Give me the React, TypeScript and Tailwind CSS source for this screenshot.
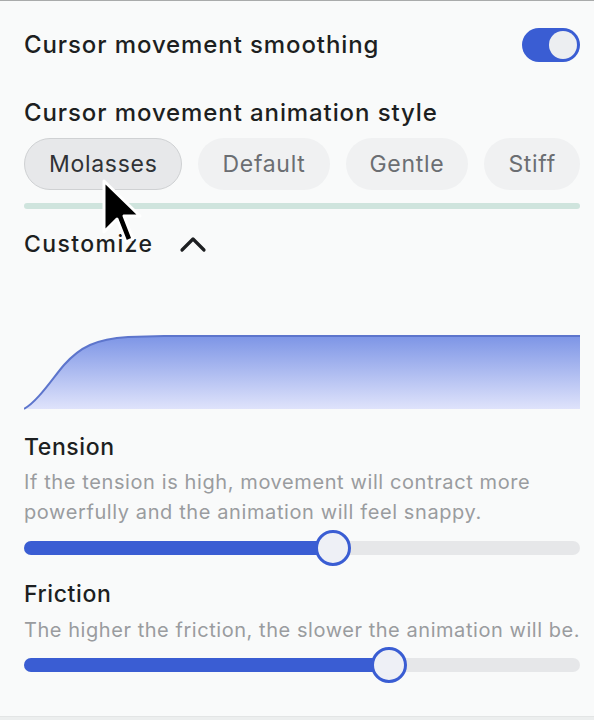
import React from "react";

const presets = ["Molasses", "Default", "Gentle", "Stiff"];

function Slider({ value }: { value: number }) {
  return (
    <div className="relative h-[14px] w-full rounded-full bg-[#e6e7e9]">
      <div
        className="absolute left-0 top-0 h-full rounded-full bg-[#3a5dd3]"
        style={{ width: `${value}%` }}
      />
      <div
        className="absolute top-1/2 h-[36px] w-[36px] -translate-x-1/2 -translate-y-1/2 rounded-full border-[3px] border-[#3a5dd3] bg-[#eef0f6]"
        style={{ left: `${value}%` }}
      />
    </div>
  );
}

export default function App() {
  return (
    <main
      className="relative flex h-[720px] w-[594px] flex-col overflow-hidden border-t border-[#a9abab] bg-[#f9fafa] text-[#1d1f21]"
      style={{ fontFamily: "Inter, 'Noto Sans', sans-serif" }}
    >
      <div className="flex flex-1 flex-col pl-6 pr-[14px]">
        {/* smoothing toggle */}
        <div className="mt-[26px] flex items-center justify-between">
          <h2 className="text-[24px] font-medium tracking-[0.9px]">Cursor movement smoothing</h2>
          <div className="flex h-[34px] w-[58px] items-center justify-end rounded-full bg-[#3a5dd3] p-[3px]">
            <div className="h-[28px] w-[28px] rounded-full bg-[#eceef1]" />
          </div>
        </div>

        <h2 className="mt-[32px] text-[24px] font-medium tracking-[0.9px]">Cursor movement animation style</h2>

        <div className="mt-[7px] flex gap-[16px]">
          {presets.map((p, i) => (
            <button
              key={p}
              className={
                i === 0
                  ? "h-[52px] rounded-full border border-[#cfd1d3] bg-[#e7e8ea] px-[24px] text-[23px] tracking-[0.7px] text-[#303236]"
                  : "h-[52px] rounded-full border border-transparent bg-[#f0f1f2] px-[23px] text-[23px] tracking-[0.7px] text-[#6b6e72]"
              }
            >
              {p}
            </button>
          ))}
        </div>

        <div className="mt-[13px] h-[6px] w-full rounded-full bg-[#cfe4dd]" />

        <div className="mt-[18px] flex items-center gap-[26px]">
          <span className="text-[23px] font-medium tracking-[1.4px]">Customize</span>
          <svg width="28" height="18" viewBox="0 0 28 18" fill="none">
            <path d="M3 15 L14 4 L25 15" stroke="#1d1f21" strokeWidth="3.2" strokeLinecap="round" strokeLinejoin="round" />
          </svg>
        </div>

        {/* spring curve */}
        <svg className="mt-[73px]" width="556" height="75" viewBox="0 0 556 75">
          <defs>
            <linearGradient id="fillg" x1="0" y1="0" x2="0" y2="1">
              <stop offset="0" stopColor="#7d95e6" />
              <stop offset="1" stopColor="#dfe3fb" />
            </linearGradient>
          </defs>
          <path
            d="M0 74 C 14 66, 28 44, 40 30 C 56 12, 72 4, 104 2 L 140 1 L 556 1 L 556 74 Z"
            fill="url(#fillg)"
          />
          <path
            d="M0 74 C 14 66, 28 44, 40 30 C 56 12, 72 4, 104 2 L 140 1 L 556 1"
            fill="none"
            stroke="#5d75cc"
            strokeWidth="2"
          />
        </svg>

        <h3 className="mt-[20px] text-[23px] font-medium tracking-[0.6px]">Tension</h3>
        <p className="mt-[3px] text-[20px] leading-[30px] tracking-[0.6px] text-[#9a9c9f]">
          If the tension is high, movement will contract more
          <br />
          powerfully and the animation will feel snappy.
        </p>
        <div className="mt-[14px]">
          <Slider value={55.6} />
        </div>

        <h3 className="mt-[22px] text-[23px] font-medium tracking-[0.6px]">Friction</h3>
        <p className="mt-[3px] whitespace-nowrap text-[20px] leading-[30px] tracking-[0.55px] text-[#9a9c9f]">
          The higher the friction, the slower the animation will be.
        </p>
        <div className="mt-[13px]">
          <Slider value={65.6} />
        </div>
      </div>

      <div className="h-[4px] border-t border-[#e3e5e5] bg-[#eceeee]" />

      {/* mouse pointer overlay */}
      <svg className="absolute left-[101px] top-[177px]" width="42" height="70" viewBox="0 0 42 70">
        <path
          d="M3 3 L3 54 L16 41 L25 64 L32 61 L23 38 L39 38 Z"
          fill="#000"
          stroke="#fff"
          strokeWidth="3"
          strokeLinejoin="round"
        />
      </svg>
    </main>
  );
}
